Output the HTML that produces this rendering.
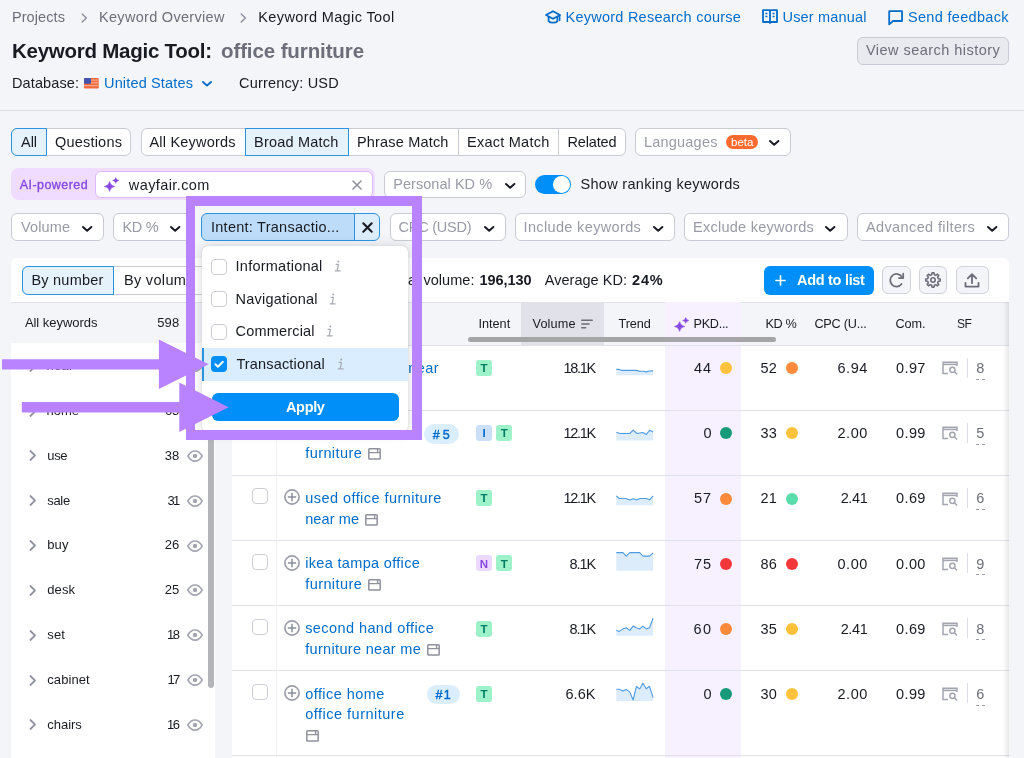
<!DOCTYPE html>
<html><head><meta charset="utf-8"><title>Keyword Magic Tool</title>
<style>
html,body{margin:0;padding:0;}
body{width:1024px;height:758px;overflow:hidden;background:#f4f5f9;position:relative;font-family:"Liberation Sans",sans-serif;}
.t{position:absolute;white-space:nowrap;font-family:"Liberation Sans",sans-serif;}
.b{position:absolute;box-sizing:border-box;overflow:visible;}
#w{position:absolute;left:0;top:0;width:1024px;height:758px;overflow:hidden;will-change:transform;background:#f4f5f9;}
</style></head><body><div id="w">
<span class="t" style="left:11.90px;top:7px;font-size:14.5px;line-height:20px;color:#6c6e79;letter-spacing:0.096px;">Projects</span>
<span class="t" style="left:99.00px;top:7px;font-size:14.5px;line-height:20px;color:#6c6e79;letter-spacing:0.299px;">Keyword Overview</span>
<span class="t" style="left:258.30px;top:7px;font-size:14.5px;line-height:20px;color:#191b23;letter-spacing:0.372px;">Keyword Magic Tool</span>
<svg class="b" style="left:80.50px;top:13.00px;" width="7" height="10" viewBox="0 0 7 10"><path d="M1.2 1 L5.4 5 L1.2 9" fill="none" stroke="#8a8e9b" stroke-width="1.4" stroke-linecap="round" stroke-linejoin="round"/></svg>
<svg class="b" style="left:239.50px;top:13.00px;" width="7" height="10" viewBox="0 0 7 10"><path d="M1.2 1 L5.4 5 L1.2 9" fill="none" stroke="#8a8e9b" stroke-width="1.4" stroke-linecap="round" stroke-linejoin="round"/></svg>
<span class="t" style="left:12.00px;top:37px;font-size:20.5px;line-height:27px;color:#191b23;font-weight:700;letter-spacing:-0.250px;">Keyword Magic Tool:</span>
<span class="t" style="left:221.00px;top:37px;font-size:20.5px;line-height:27px;color:#6c6e79;font-weight:700;letter-spacing:-0.106px;">office furniture</span>
<span class="t" style="left:12.00px;top:73px;font-size:14.5px;line-height:20px;color:#191b23;letter-spacing:0.106px;">Database:</span>
<span class="t" style="left:104.00px;top:73px;font-size:14.5px;line-height:20px;color:#006dca;letter-spacing:0.156px;">United States</span>
<svg class="b" style="left:201.60px;top:80.90px;" width="10" height="6.0" viewBox="-1 -1 10 6.0"><path d="M0 0 L4.0 3.6 L8 0" fill="none" stroke="#006dca" stroke-width="1.9" stroke-linecap="round" stroke-linejoin="round"/></svg>
<span class="t" style="left:239.00px;top:73px;font-size:14.5px;line-height:20px;color:#191b23;letter-spacing:0.177px;">Currency: USD</span>
<svg class="b" style="left:84.00px;top:78.00px;" width="15" height="11" viewBox="0 0 15 11"><rect width="14.8" height="10.4" rx="1" fill="#f4693c"/><rect x="7" y="1.5" width="7.8" height="1.2" fill="#f9a88d"/><rect x="7" y="4.2" width="7.8" height="1.2" fill="#f9a88d"/><rect y="7.0" width="14.8" height="1.2" fill="#f9a88d"/><rect width="7" height="5.8" rx="1" fill="#4453ad"/></svg>
<span class="t" style="left:565.50px;top:7px;font-size:14.5px;line-height:20px;color:#006dca;letter-spacing:0.242px;">Keyword Research course</span>
<span class="t" style="left:782.50px;top:7px;font-size:14.5px;line-height:20px;color:#006dca;letter-spacing:0.172px;">User manual</span>
<span class="t" style="left:908.00px;top:7px;font-size:14.5px;line-height:20px;color:#006dca;letter-spacing:0.309px;">Send feedback</span>
<svg class="b" style="left:545.00px;top:9.50px;" width="16" height="15" viewBox="0 0 16 15"><path d="M8 1.2 L15 5 L8 8.8 L1 5 Z" fill="none" stroke="#006dca" stroke-width="1.8" stroke-linejoin="round"/><path d="M3.6 7 V11.2 C5 13.2 11 13.2 12.4 11.2 V7" fill="none" stroke="#006dca" stroke-width="1.8" stroke-linejoin="round"/><path d="M14.6 5.4 V10.5" stroke="#006dca" stroke-width="1.6" stroke-linecap="round"/></svg>
<svg class="b" style="left:762.00px;top:9.00px;" width="16" height="16" viewBox="0 0 16 16"><path d="M1 1.2 H7 Q8 1.2 8 2.2 V14 Q8 13 7 13 H1 Z M15 1.2 H9 Q8 1.2 8 2.2 V14 Q8 13 9 13 H15 Z" fill="none" stroke="#006dca" stroke-width="1.8" stroke-linejoin="round"/><path d="M3.4 4.6 H5.4 M3.4 7.4 H5.4 M10.6 4.6 H12.6 M10.6 7.4 H12.6" stroke="#006dca" stroke-width="1.5"/></svg>
<svg class="b" style="left:888.00px;top:9.50px;" width="16" height="16" viewBox="0 0 16 16"><path d="M1.2 1.2 H14 V11 H5 L1.2 14.4 Z" fill="none" stroke="#006dca" stroke-width="1.8" stroke-linejoin="round"/></svg>
<div class="b" style="left:856.50px;top:37.00px;width:152.70px;height:28.00px;background:#e9eaef;border:1px solid #c8cbd3;border-radius:6px;"></div>
<span class="t" style="left:866.00px;top:40px;font-size:14.5px;line-height:20px;color:#6c6e79;letter-spacing:0.462px;">View search history</span>
<div class="b" style="left:0.00px;top:109.50px;width:1024.00px;height:1.00px;background:#dcdee4;"></div>
<div class="b" style="left:11.20px;top:127.50px;width:120.00px;height:28.00px;background:#fff;border:1px solid #c8cbd3;border-radius:6px;"></div>
<div class="b" style="left:11.20px;top:127.50px;width:35.40px;height:28.00px;background:#e5f1fb;border:1px solid #2b94e1;border-radius:6px 0px 0px 6px;"></div>
<span class="t" style="left:21.00px;top:132px;font-size:14.5px;line-height:20px;color:#191b23;letter-spacing:-0.046px;">All</span>
<span class="t" style="left:55.00px;top:132px;font-size:14.5px;line-height:20px;color:#191b23;letter-spacing:0.202px;">Questions</span>
<div class="b" style="left:140.50px;top:127.50px;width:485.50px;height:28.00px;background:#fff;border:1px solid #c8cbd3;border-radius:6px;"></div>
<div class="b" style="left:457.50px;top:128.50px;width:1.00px;height:26.00px;background:#c8cbd3;"></div>
<div class="b" style="left:557.90px;top:128.50px;width:1.00px;height:26.00px;background:#c8cbd3;"></div>
<div class="b" style="left:244.50px;top:127.50px;width:104.00px;height:28.00px;background:#e5f1fb;border:1px solid #2b94e1;border-radius:0px 0px 0px 0px;"></div>
<span class="t" style="left:149.50px;top:132px;font-size:14.5px;line-height:20px;color:#191b23;letter-spacing:0.191px;">All Keywords</span>
<span class="t" style="left:254.00px;top:132px;font-size:14.5px;line-height:20px;color:#191b23;letter-spacing:0.219px;">Broad Match</span>
<span class="t" style="left:357.00px;top:132px;font-size:14.5px;line-height:20px;color:#191b23;letter-spacing:0.178px;">Phrase Match</span>
<span class="t" style="left:467.00px;top:132px;font-size:14.5px;line-height:20px;color:#191b23;letter-spacing:0.250px;">Exact Match</span>
<span class="t" style="left:567.50px;top:132px;font-size:14.5px;line-height:20px;color:#191b23;letter-spacing:-0.150px;">Related</span>
<div class="b" style="left:635.00px;top:127.50px;width:155.50px;height:28.00px;background:#fff;border:1px solid #c8cbd3;border-radius:6px;"></div>
<span class="t" style="left:644.00px;top:132px;font-size:14.5px;line-height:20px;color:#989ba6;letter-spacing:0.204px;">Languages</span>
<div class="b" style="left:726.00px;top:134.60px;width:31.60px;height:14.10px;background:#ff6b2e;border-radius:7px;"></div>
<span class="t" style="left:731.00px;top:134px;font-size:11.5px;line-height:16px;color:#fff;letter-spacing:0.034px;">beta</span>
<svg class="b" style="left:768.80px;top:139.70px;" width="10.4" height="6.2" viewBox="-1 -1 10.4 6.2"><path d="M0 0 L4.2 3.8000000000000003 L8.4 0" fill="none" stroke="#191b23" stroke-width="2" stroke-linecap="round" stroke-linejoin="round"/></svg>
<div class="b" style="left:11.20px;top:168.30px;width:363.80px;height:32.20px;background:#efdcff;border-radius:8px;"></div>
<span class="t" style="left:19.80px;top:176px;font-size:12.5px;line-height:18px;color:#8649e1;letter-spacing:0.429px;-webkit-text-stroke:0.35px #8649e1;">AI-powered</span>
<div class="b" style="left:94.70px;top:170.80px;width:278.30px;height:27.40px;background:#fff;border:1px solid #dcb8ff;border-radius:6px;"></div>
<span class="t" style="left:128.80px;top:175px;font-size:14.5px;line-height:20px;color:#191b23;letter-spacing:0.405px;">wayfair.com</span>
<svg class="b" style="left:104.00px;top:176.00px;" width="16.0" height="16.0" viewBox="0 0 16 16"><path d="M5.6 5.6 Q6.4319999999999995 9.716 10.8 10.5 Q6.4319999999999995 11.284 5.6 15.4 Q4.768 11.284 0.39999999999999947 10.5 Q4.768 9.716 5.6 5.6 Z" fill="#8649e1" stroke="#8649e1" stroke-width="0.5" stroke-linejoin="round"/><path d="M11.75 1.5500000000000003 Q12.262 3.986 14.95 4.45 Q12.262 4.914 11.75 7.35 Q11.238 4.914 8.55 4.45 Q11.238 3.986 11.75 1.5500000000000003 Z" fill="#8649e1" stroke="#8649e1" stroke-width="0.4" stroke-linejoin="round"/></svg>
<svg class="b" style="left:352.00px;top:179.50px;" width="10" height="10" viewBox="0 0 10 10"><path d="M1 1 L9 9 M9 1 L1 9" stroke="#8a8e9b" stroke-width="1.5" stroke-linecap="round"/></svg>
<div class="b" style="left:384.00px;top:170.50px;width:142.20px;height:27.90px;background:#fff;border:1px solid #c8cbd3;border-radius:6px;"></div>
<span class="t" style="left:393.30px;top:174px;font-size:14.5px;line-height:20px;color:#989ba6;letter-spacing:0.038px;">Personal KD %</span>
<svg class="b" style="left:504.50px;top:182.50px;" width="10.4" height="6.2" viewBox="-1 -1 10.4 6.2"><path d="M0 0 L4.2 3.8000000000000003 L8.4 0" fill="none" stroke="#191b23" stroke-width="2" stroke-linecap="round" stroke-linejoin="round"/></svg>
<div class="b" style="left:535.10px;top:174.80px;width:36.10px;height:19.70px;background:#008ff8;border-radius:10px;"></div>
<div class="b" style="left:553.20px;top:176.40px;width:16.70px;height:16.60px;background:#fff;border-radius:50%;"></div>
<span class="t" style="left:580.50px;top:174px;font-size:14.5px;line-height:20px;color:#191b23;letter-spacing:0.311px;">Show ranking keywords</span>
<div class="b" style="left:11.40px;top:213.20px;width:92.70px;height:28.30px;background:#fff;border:1px solid #c8cbd3;border-radius:6px;"></div>
<span class="t" style="left:21.00px;top:217px;font-size:14.5px;line-height:20px;color:#989ba6;letter-spacing:0.116px;">Volume</span>
<svg class="b" style="left:82.20px;top:225.60px;" width="10.4" height="6.2" viewBox="-1 -1 10.4 6.2"><path d="M0 0 L4.2 3.8000000000000003 L8.4 0" fill="none" stroke="#191b23" stroke-width="2" stroke-linecap="round" stroke-linejoin="round"/></svg>
<div class="b" style="left:113.00px;top:213.20px;width:79.00px;height:28.30px;background:#fff;border:1px solid #c8cbd3;border-radius:6px;"></div>
<span class="t" style="left:122.50px;top:217px;font-size:14.5px;line-height:20px;color:#989ba6;letter-spacing:-0.304px;">KD %</span>
<svg class="b" style="left:170.30px;top:225.60px;" width="10.4" height="6.2" viewBox="-1 -1 10.4 6.2"><path d="M0 0 L4.2 3.8000000000000003 L8.4 0" fill="none" stroke="#191b23" stroke-width="2" stroke-linecap="round" stroke-linejoin="round"/></svg>
<div class="b" style="left:389.50px;top:213.20px;width:116.50px;height:28.30px;background:#fff;border:1px solid #c8cbd3;border-radius:6px;"></div>
<span class="t" style="left:398.50px;top:217px;font-size:14.5px;line-height:20px;color:#989ba6;letter-spacing:-0.225px;">CPC (USD)</span>
<svg class="b" style="left:483.80px;top:225.60px;" width="10.4" height="6.2" viewBox="-1 -1 10.4 6.2"><path d="M0 0 L4.2 3.8000000000000003 L8.4 0" fill="none" stroke="#191b23" stroke-width="2" stroke-linecap="round" stroke-linejoin="round"/></svg>
<div class="b" style="left:514.50px;top:213.20px;width:160.50px;height:28.30px;background:#fff;border:1px solid #c8cbd3;border-radius:6px;"></div>
<span class="t" style="left:523.50px;top:217px;font-size:14.5px;line-height:20px;color:#989ba6;letter-spacing:0.353px;">Include keywords</span>
<svg class="b" style="left:652.80px;top:225.60px;" width="10.4" height="6.2" viewBox="-1 -1 10.4 6.2"><path d="M0 0 L4.2 3.8000000000000003 L8.4 0" fill="none" stroke="#191b23" stroke-width="2" stroke-linecap="round" stroke-linejoin="round"/></svg>
<div class="b" style="left:683.50px;top:213.20px;width:164.00px;height:28.30px;background:#fff;border:1px solid #c8cbd3;border-radius:6px;"></div>
<span class="t" style="left:693.00px;top:217px;font-size:14.5px;line-height:20px;color:#989ba6;letter-spacing:0.267px;">Exclude keywords</span>
<svg class="b" style="left:825.30px;top:225.60px;" width="10.4" height="6.2" viewBox="-1 -1 10.4 6.2"><path d="M0 0 L4.2 3.8000000000000003 L8.4 0" fill="none" stroke="#191b23" stroke-width="2" stroke-linecap="round" stroke-linejoin="round"/></svg>
<div class="b" style="left:856.50px;top:213.20px;width:152.80px;height:28.30px;background:#fff;border:1px solid #c8cbd3;border-radius:6px;"></div>
<span class="t" style="left:866.00px;top:217px;font-size:14.5px;line-height:20px;color:#989ba6;letter-spacing:0.377px;">Advanced filters</span>
<svg class="b" style="left:986.80px;top:225.60px;" width="10.4" height="6.2" viewBox="-1 -1 10.4 6.2"><path d="M0 0 L4.2 3.8000000000000003 L8.4 0" fill="none" stroke="#191b23" stroke-width="2" stroke-linecap="round" stroke-linejoin="round"/></svg>
<div class="b" style="left:201.20px;top:213.20px;width:153.80px;height:28.30px;background:#bcdcf9;border:1px solid #2b94e1;border-radius:6px 0 0 6px;"></div>
<div class="b" style="left:354.00px;top:213.20px;width:26.30px;height:28.30px;background:#deedfb;border:1px solid #2b94e1;border-radius:0 6px 6px 0;"></div>
<span class="t" style="left:211.00px;top:217px;font-size:14.5px;line-height:20px;color:#191b23;letter-spacing:0.253px;">Intent: Transactio...</span>
<svg class="b" style="left:362.00px;top:222.00px;" width="11" height="11" viewBox="0 0 11 11"><path d="M1.3 1.3 L9.7 9.7 M9.7 1.3 L1.3 9.7" stroke="#191b23" stroke-width="2.1" stroke-linecap="round"/></svg>
<div class="b" style="left:11.30px;top:257.70px;width:203.90px;height:512.30px;background:#fff;border-radius:6px;"></div>
<div class="b" style="left:22.00px;top:266.00px;width:228.00px;height:28.50px;background:#fff;border:1px solid #c8cbd3;border-radius:6px;"></div>
<div class="b" style="left:22.00px;top:266.00px;width:91.70px;height:28.50px;background:#e5f1fb;border:1px solid #2b94e1;border-radius:6px 0 0 6px;"></div>
<span class="t" style="left:31.40px;top:270px;font-size:14.5px;line-height:20px;color:#191b23;letter-spacing:0.234px;">By number</span>
<span class="t" style="left:123.90px;top:270px;font-size:14.5px;line-height:20px;color:#191b23;letter-spacing:0.342px;">By volume</span>
<div class="b" style="left:11.30px;top:302.00px;width:203.90px;height:41.00px;background:#f4f5f9;"></div>
<div class="b" style="left:11.30px;top:301.60px;width:203.90px;height:1.00px;background:#e0e1e9;"></div>
<span class="t" style="left:24.90px;top:313px;font-size:13px;line-height:19px;color:#191b23;letter-spacing:-0.040px;">All keywords</span>
<span class="t" style="left:157.30px;top:313px;font-size:13px;line-height:19px;color:#191b23;letter-spacing:0.084px;">598</span>
<svg class="b" style="left:29.40px;top:360.70px;" width="8" height="11" viewBox="0 0 8 11"><path d="M1.4 1 L6 5.5 L1.4 10" fill="none" stroke="#9194a0" stroke-width="1.75" stroke-linecap="round" stroke-linejoin="round"/></svg>
<span class="t" style="left:46.50px;top:356px;font-size:13px;line-height:19px;color:#191b23;letter-spacing:0.280px;">near</span>
<span class="t" style="left:165.00px;top:356px;font-size:13px;line-height:19px;color:#191b23;letter-spacing:-0.173px;">84</span>
<svg class="b" style="left:186.80px;top:360.20px;" width="16" height="12" viewBox="0 0 16 12"><path d="M0.8 6 C3 2.2 5.4 0.9 8 0.9 C10.6 0.9 13 2.2 15.2 6 C13 9.8 10.6 11.1 8 11.1 C5.4 11.1 3 9.8 0.8 6 Z" fill="none" stroke="#a3a6b1" stroke-width="1.55"/><circle cx="8" cy="6" r="2.2" fill="#a3a6b1"/></svg>
<svg class="b" style="left:29.40px;top:405.54px;" width="8" height="11" viewBox="0 0 8 11"><path d="M1.4 1 L6 5.5 L1.4 10" fill="none" stroke="#9194a0" stroke-width="1.75" stroke-linecap="round" stroke-linejoin="round"/></svg>
<span class="t" style="left:46.50px;top:401px;font-size:13px;line-height:19px;color:#191b23;letter-spacing:-0.005px;">home</span>
<span class="t" style="left:165.00px;top:401px;font-size:13px;line-height:19px;color:#191b23;letter-spacing:-0.173px;">65</span>
<svg class="b" style="left:186.80px;top:405.04px;" width="16" height="12" viewBox="0 0 16 12"><path d="M0.8 6 C3 2.2 5.4 0.9 8 0.9 C10.6 0.9 13 2.2 15.2 6 C13 9.8 10.6 11.1 8 11.1 C5.4 11.1 3 9.8 0.8 6 Z" fill="none" stroke="#a3a6b1" stroke-width="1.55"/><circle cx="8" cy="6" r="2.2" fill="#a3a6b1"/></svg>
<svg class="b" style="left:29.40px;top:450.38px;" width="8" height="11" viewBox="0 0 8 11"><path d="M1.4 1 L6 5.5 L1.4 10" fill="none" stroke="#9194a0" stroke-width="1.75" stroke-linecap="round" stroke-linejoin="round"/></svg>
<span class="t" style="left:47.30px;top:446px;font-size:13px;line-height:19px;color:#191b23;letter-spacing:-0.344px;">use</span>
<span class="t" style="left:164.80px;top:446px;font-size:13px;line-height:19px;color:#191b23;letter-spacing:-0.040px;">38</span>
<svg class="b" style="left:186.80px;top:449.88px;" width="16" height="12" viewBox="0 0 16 12"><path d="M0.8 6 C3 2.2 5.4 0.9 8 0.9 C10.6 0.9 13 2.2 15.2 6 C13 9.8 10.6 11.1 8 11.1 C5.4 11.1 3 9.8 0.8 6 Z" fill="none" stroke="#a3a6b1" stroke-width="1.55"/><circle cx="8" cy="6" r="2.2" fill="#a3a6b1"/></svg>
<svg class="b" style="left:29.40px;top:495.22px;" width="8" height="11" viewBox="0 0 8 11"><path d="M1.4 1 L6 5.5 L1.4 10" fill="none" stroke="#9194a0" stroke-width="1.75" stroke-linecap="round" stroke-linejoin="round"/></svg>
<span class="t" style="left:47.30px;top:491px;font-size:13px;line-height:19px;color:#191b23;letter-spacing:-0.328px;">sale</span>
<span class="t" style="left:167.50px;top:491px;font-size:13px;line-height:19px;color:#191b23;letter-spacing:-1.840px;">31</span>
<svg class="b" style="left:186.80px;top:494.72px;" width="16" height="12" viewBox="0 0 16 12"><path d="M0.8 6 C3 2.2 5.4 0.9 8 0.9 C10.6 0.9 13 2.2 15.2 6 C13 9.8 10.6 11.1 8 11.1 C5.4 11.1 3 9.8 0.8 6 Z" fill="none" stroke="#a3a6b1" stroke-width="1.55"/><circle cx="8" cy="6" r="2.2" fill="#a3a6b1"/></svg>
<svg class="b" style="left:29.40px;top:540.06px;" width="8" height="11" viewBox="0 0 8 11"><path d="M1.4 1 L6 5.5 L1.4 10" fill="none" stroke="#9194a0" stroke-width="1.75" stroke-linecap="round" stroke-linejoin="round"/></svg>
<span class="t" style="left:47.30px;top:535px;font-size:13px;line-height:19px;color:#191b23;letter-spacing:0.096px;">buy</span>
<span class="t" style="left:164.80px;top:535px;font-size:13px;line-height:19px;color:#191b23;letter-spacing:-0.040px;">26</span>
<svg class="b" style="left:186.80px;top:539.56px;" width="16" height="12" viewBox="0 0 16 12"><path d="M0.8 6 C3 2.2 5.4 0.9 8 0.9 C10.6 0.9 13 2.2 15.2 6 C13 9.8 10.6 11.1 8 11.1 C5.4 11.1 3 9.8 0.8 6 Z" fill="none" stroke="#a3a6b1" stroke-width="1.55"/><circle cx="8" cy="6" r="2.2" fill="#a3a6b1"/></svg>
<svg class="b" style="left:29.40px;top:584.90px;" width="8" height="11" viewBox="0 0 8 11"><path d="M1.4 1 L6 5.5 L1.4 10" fill="none" stroke="#9194a0" stroke-width="1.75" stroke-linecap="round" stroke-linejoin="round"/></svg>
<span class="t" style="left:47.30px;top:580px;font-size:13px;line-height:19px;color:#191b23;letter-spacing:0.069px;">desk</span>
<span class="t" style="left:164.80px;top:580px;font-size:13px;line-height:19px;color:#191b23;letter-spacing:-0.040px;">25</span>
<svg class="b" style="left:186.80px;top:584.40px;" width="16" height="12" viewBox="0 0 16 12"><path d="M0.8 6 C3 2.2 5.4 0.9 8 0.9 C10.6 0.9 13 2.2 15.2 6 C13 9.8 10.6 11.1 8 11.1 C5.4 11.1 3 9.8 0.8 6 Z" fill="none" stroke="#a3a6b1" stroke-width="1.55"/><circle cx="8" cy="6" r="2.2" fill="#a3a6b1"/></svg>
<svg class="b" style="left:29.40px;top:629.74px;" width="8" height="11" viewBox="0 0 8 11"><path d="M1.4 1 L6 5.5 L1.4 10" fill="none" stroke="#9194a0" stroke-width="1.75" stroke-linecap="round" stroke-linejoin="round"/></svg>
<span class="t" style="left:47.30px;top:625px;font-size:13px;line-height:19px;color:#191b23;letter-spacing:0.143px;">set</span>
<span class="t" style="left:167.00px;top:625px;font-size:13px;line-height:19px;color:#191b23;letter-spacing:-1.506px;">18</span>
<svg class="b" style="left:186.80px;top:629.24px;" width="16" height="12" viewBox="0 0 16 12"><path d="M0.8 6 C3 2.2 5.4 0.9 8 0.9 C10.6 0.9 13 2.2 15.2 6 C13 9.8 10.6 11.1 8 11.1 C5.4 11.1 3 9.8 0.8 6 Z" fill="none" stroke="#a3a6b1" stroke-width="1.55"/><circle cx="8" cy="6" r="2.2" fill="#a3a6b1"/></svg>
<svg class="b" style="left:29.40px;top:674.58px;" width="8" height="11" viewBox="0 0 8 11"><path d="M1.4 1 L6 5.5 L1.4 10" fill="none" stroke="#9194a0" stroke-width="1.75" stroke-linecap="round" stroke-linejoin="round"/></svg>
<span class="t" style="left:47.30px;top:670px;font-size:13px;line-height:19px;color:#191b23;letter-spacing:0.059px;">cabinet</span>
<span class="t" style="left:167.50px;top:670px;font-size:13px;line-height:19px;color:#191b23;letter-spacing:-1.840px;">17</span>
<svg class="b" style="left:186.80px;top:674.08px;" width="16" height="12" viewBox="0 0 16 12"><path d="M0.8 6 C3 2.2 5.4 0.9 8 0.9 C10.6 0.9 13 2.2 15.2 6 C13 9.8 10.6 11.1 8 11.1 C5.4 11.1 3 9.8 0.8 6 Z" fill="none" stroke="#a3a6b1" stroke-width="1.55"/><circle cx="8" cy="6" r="2.2" fill="#a3a6b1"/></svg>
<svg class="b" style="left:29.40px;top:719.42px;" width="8" height="11" viewBox="0 0 8 11"><path d="M1.4 1 L6 5.5 L1.4 10" fill="none" stroke="#9194a0" stroke-width="1.75" stroke-linecap="round" stroke-linejoin="round"/></svg>
<span class="t" style="left:47.30px;top:715px;font-size:13px;line-height:19px;color:#191b23;letter-spacing:-0.032px;">chairs</span>
<span class="t" style="left:166.90px;top:715px;font-size:13px;line-height:19px;color:#191b23;letter-spacing:-1.440px;">16</span>
<svg class="b" style="left:186.80px;top:718.92px;" width="16" height="12" viewBox="0 0 16 12"><path d="M0.8 6 C3 2.2 5.4 0.9 8 0.9 C10.6 0.9 13 2.2 15.2 6 C13 9.8 10.6 11.1 8 11.1 C5.4 11.1 3 9.8 0.8 6 Z" fill="none" stroke="#a3a6b1" stroke-width="1.55"/><circle cx="8" cy="6" r="2.2" fill="#a3a6b1"/></svg>
<div class="b" style="left:208.00px;top:346.00px;width:5.70px;height:342.40px;background:#b4b5bb;border-radius:3px;"></div>
<div class="b" style="left:231.80px;top:257.70px;width:777.50px;height:512.30px;background:#fff;border-radius:6px;"></div>
<div class="b" style="left:231.80px;top:302.20px;width:777.50px;height:43.00px;background:#f4f5f9;"></div>
<div class="b" style="left:231.80px;top:301.70px;width:777.50px;height:1.00px;background:#e0e1e9;"></div>
<div class="b" style="left:520.60px;top:302.20px;width:83.60px;height:43.00px;background:#e0e1e9;"></div>
<div class="b" style="left:665.20px;top:302.20px;width:75.40px;height:467.80px;background:#f7f0ff;"></div>
<div class="b" style="left:231.80px;top:344.60px;width:777.50px;height:1.00px;background:#e0e1e9;"></div>
<div class="b" style="left:231.80px;top:409.77px;width:777.50px;height:1.00px;background:#e0e1e9;"></div>
<div class="b" style="left:231.80px;top:474.94px;width:777.50px;height:1.00px;background:#e0e1e9;"></div>
<div class="b" style="left:231.80px;top:540.11px;width:777.50px;height:1.00px;background:#e0e1e9;"></div>
<div class="b" style="left:231.80px;top:605.28px;width:777.50px;height:1.00px;background:#e0e1e9;"></div>
<div class="b" style="left:231.80px;top:670.45px;width:777.50px;height:1.00px;background:#e0e1e9;"></div>
<div class="b" style="left:231.80px;top:755.30px;width:777.50px;height:1.00px;background:#e0e1e9;"></div>
<div class="b" style="left:275.60px;top:345.20px;width:0.80px;height:424.80px;background:#f1f2f5;"></div>
<span class="t" style="left:244.00px;top:270px;font-size:14.5px;line-height:20px;color:#191b23;letter-spacing:0.000px;">All keywords: 598</span>
<span class="t" style="left:388.50px;top:270px;font-size:14.5px;line-height:20px;color:#191b23;letter-spacing:0.046px;">Total volume:</span>
<span class="t" style="left:479.60px;top:270px;font-size:14.5px;line-height:20px;color:#191b23;font-weight:700;letter-spacing:-0.094px;">196,130</span>
<span class="t" style="left:544.70px;top:270px;font-size:14.5px;line-height:20px;color:#191b23;letter-spacing:0.034px;">Average KD:</span>
<span class="t" style="left:632.00px;top:270px;font-size:14.5px;line-height:20px;color:#191b23;font-weight:700;letter-spacing:0.872px;">24%</span>
<div class="b" style="left:764.10px;top:266.00px;width:110.00px;height:28.70px;background:#008ff8;border-radius:6px;"></div>
<span class="t" style="left:797.10px;top:270px;font-size:14.5px;line-height:20px;color:#fff;font-weight:700;letter-spacing:-0.303px;">Add to list</span>
<svg class="b" style="left:774.90px;top:274.70px;" width="11" height="11" viewBox="0 0 11 11"><path d="M5.5 0.9 V10.1 M0.9 5.5 H10.1" stroke="#fff" stroke-width="1.6" stroke-linecap="round"/></svg>
<div class="b" style="left:882.10px;top:266.10px;width:28.50px;height:28.30px;background:#f4f5f9;border:1px solid #cfd2d9;border-radius:6px;"></div>
<div class="b" style="left:919.00px;top:266.10px;width:28.00px;height:28.30px;background:#f4f5f9;border:1px solid #cfd2d9;border-radius:6px;"></div>
<div class="b" style="left:955.70px;top:266.10px;width:33.10px;height:28.30px;background:#f4f5f9;border:1px solid #cfd2d9;border-radius:6px;"></div>
<svg class="b" style="left:888.00px;top:272.00px;" width="18" height="17" viewBox="0 0 18 17"><path d="M13.6 12.0 A6.3 6.3 0 1 1 13.9 5.0" fill="none" stroke="#6c6e79" stroke-width="1.75" stroke-linecap="round"/><path d="M15.2 1.7 V6.0 H10.9" fill="none" stroke="#6c6e79" stroke-width="1.75" stroke-linecap="round" stroke-linejoin="round"/></svg>
<svg class="b" style="left:924.90px;top:272.00px;" width="16" height="16" viewBox="0 0 16 16"><path d="M13.35 6.72 L15.24 7.03 L15.24 8.97 L13.35 9.28 L12.69 10.87 L13.80 12.43 L12.43 13.80 L10.87 12.69 L9.28 13.35 L8.97 15.24 L7.03 15.24 L6.72 13.35 L5.13 12.69 L3.57 13.80 L2.20 12.43 L3.31 10.87 L2.65 9.28 L0.76 8.97 L0.76 7.03 L2.65 6.72 L3.31 5.13 L2.20 3.57 L3.57 2.20 L5.13 3.31 L6.72 2.65 L7.03 0.76 L8.97 0.76 L9.28 2.65 L10.87 3.31 L12.43 2.20 L13.80 3.57 L12.69 5.13 Z" fill="none" stroke="#6c6e79" stroke-width="1.6" stroke-linejoin="round"/><circle cx="8" cy="8" r="2.2" fill="none" stroke="#6c6e79" stroke-width="1.6"/></svg>
<svg class="b" style="left:963.90px;top:272.00px;" width="16" height="16" viewBox="0 0 16 16"><path d="M8 11.2 V2.4 M3.8 6.4 L8 2.2 L12.2 6.4" fill="none" stroke="#6c6e79" stroke-width="1.8" stroke-linecap="round" stroke-linejoin="round"/><path d="M1.5 11 V14.6 H14.5 V11" fill="none" stroke="#6c6e79" stroke-width="1.8" stroke-linecap="round" stroke-linejoin="round"/></svg>
<span class="t" style="left:305.00px;top:315px;font-size:12.7px;line-height:18px;color:#191b23;letter-spacing:0.000px;">Keyword</span>
<span class="t" style="left:478.40px;top:315px;font-size:12.7px;line-height:18px;color:#191b23;letter-spacing:0.005px;">Intent</span>
<span class="t" style="left:532.50px;top:315px;font-size:12.7px;line-height:18px;color:#191b23;letter-spacing:0.153px;">Volume</span>
<svg class="b" style="left:581.30px;top:319.00px;" width="12" height="10" viewBox="0 0 12 10"><path d="M0.8 1.2 H11.2 M0.8 5 H8 M0.8 8.8 H4.6" stroke="#6c6e79" stroke-width="1.6" stroke-linecap="round"/></svg>
<span class="t" style="left:618.50px;top:315px;font-size:12.7px;line-height:18px;color:#191b23;letter-spacing:-0.112px;">Trend</span>
<svg class="b" style="left:674.20px;top:316.20px;" width="16.0" height="16.0" viewBox="0 0 16 16"><path d="M5.6 5.6 Q6.4319999999999995 9.716 10.8 10.5 Q6.4319999999999995 11.284 5.6 15.4 Q4.768 11.284 0.39999999999999947 10.5 Q4.768 9.716 5.6 5.6 Z" fill="#8649e1" stroke="#8649e1" stroke-width="0.5" stroke-linejoin="round"/><path d="M11.75 1.5500000000000003 Q12.262 3.986 14.95 4.45 Q12.262 4.914 11.75 7.35 Q11.238 4.914 8.55 4.45 Q11.238 3.986 11.75 1.5500000000000003 Z" fill="#8649e1" stroke="#8649e1" stroke-width="0.4" stroke-linejoin="round"/></svg>
<span class="t" style="left:693.50px;top:315px;font-size:12.7px;line-height:18px;color:#191b23;letter-spacing:-0.309px;">PKD...</span>
<span class="t" style="left:765.50px;top:315px;font-size:12.7px;line-height:18px;color:#191b23;letter-spacing:-0.361px;">KD %</span>
<span class="t" style="left:814.40px;top:315px;font-size:12.7px;line-height:18px;color:#191b23;letter-spacing:-0.239px;">CPC (U...</span>
<span class="t" style="left:895.50px;top:315px;font-size:12.7px;line-height:18px;color:#191b23;letter-spacing:-0.098px;">Com.</span>
<span class="t" style="left:956.90px;top:315px;font-size:12px;line-height:18px;color:#191b23;letter-spacing:-0.423px;">SF</span>
<div class="b" style="left:468.00px;top:336.60px;width:308.00px;height:5.80px;background:#a5a5a8;border-radius:3px;"></div>
<svg class="b" style="left:0;top:0" width="1024" height="758" viewBox="0 0 1024 758">
<path d="M616.3 369.4 L619.3 369.4 L621.8 370.4 L636.3 370.4 L639.3 371.1 L643.3 371.3 L646.3 371.9 L649.3 371.0 L653.1 370.9 L653.1 375.3 L616.3 375.3 Z" fill="#dcecfb"/><path d="M616.3 369.4 L619.3 369.4 L621.8 370.4 L636.3 370.4 L639.3 371.1 L643.3 371.3 L646.3 371.9 L649.3 371.0 L653.1 370.9" fill="none" stroke="#4f9be3" stroke-width="1.1" stroke-linejoin="round"/>
<path d="M616.3 432.2 L619.8 433.5 L629.8 433.5 L633.1 430.1 L637.0 433.5 L642.9 432.5 L646.3 434.4 L649.8 430.2 L653.1 432.1 L653.1 440.4 L616.3 440.4 Z" fill="#dcecfb"/><path d="M616.3 432.2 L619.8 433.5 L629.8 433.5 L633.1 430.1 L637.0 433.5 L642.9 432.5 L646.3 434.4 L649.8 430.2 L653.1 432.1" fill="none" stroke="#4f9be3" stroke-width="1.1" stroke-linejoin="round"/>
<path d="M616.3 495.8 L619.3 498.5 L625.8 498.5 L629.8 500.0 L633.1 498.7 L636.6 500.0 L639.9 498.5 L646.3 498.5 L649.5 499.8 L653.1 495.8 L653.1 505.3 L616.3 505.3 Z" fill="#dcecfb"/><path d="M616.3 495.8 L619.3 498.5 L625.8 498.5 L629.8 500.0 L633.1 498.7 L636.6 500.0 L639.9 498.5 L646.3 498.5 L649.5 499.8 L653.1 495.8" fill="none" stroke="#4f9be3" stroke-width="1.1" stroke-linejoin="round"/>
<path d="M616.3 552.6 L622.9 552.6 L626.2 556.1 L629.8 552.6 L639.7 552.6 L643.0 556.1 L649.5 556.1 L653.1 552.8 L653.1 570.8 L616.3 570.8 Z" fill="#dcecfb"/><path d="M616.3 552.6 L622.9 552.6 L626.2 556.1 L629.8 552.6 L639.7 552.6 L643.0 556.1 L649.5 556.1 L653.1 552.8" fill="none" stroke="#4f9be3" stroke-width="1.1" stroke-linejoin="round"/>
<path d="M616.3 630.2 L619.2 631.4 L622.9 628.9 L626.2 627.8 L629.8 630.4 L633.1 626.1 L636.4 627.8 L639.7 628.9 L642.9 626.1 L646.2 628.9 L649.5 627.8 L653.1 618.2 L653.1 635.7 L616.3 635.7 Z" fill="#dcecfb"/><path d="M616.3 630.2 L619.2 631.4 L622.9 628.9 L626.2 627.8 L629.8 630.4 L633.1 626.1 L636.4 627.8 L639.7 628.9 L642.9 626.1 L646.2 628.9 L649.5 627.8 L653.1 618.2" fill="none" stroke="#4f9be3" stroke-width="1.1" stroke-linejoin="round"/>
<path d="M616.3 689.2 L619.2 689.2 L622.9 691.1 L626.2 689.4 L629.8 692.1 L633.1 700.0 L636.4 686.5 L639.7 688.9 L642.9 683.2 L646.2 688.8 L649.5 686.3 L653.1 697.7 L653.1 701 L616.3 701 Z" fill="#dcecfb"/><path d="M616.3 689.2 L619.2 689.2 L622.9 691.1 L626.2 689.4 L629.8 692.1 L633.1 700.0 L636.4 686.5 L639.7 688.9 L642.9 683.2 L646.2 688.8 L649.5 686.3 L653.1 697.7" fill="none" stroke="#4f9be3" stroke-width="1.1" stroke-linejoin="round"/>
</svg>
<span class="t" style="left:305.20px;top:358px;font-size:14.5px;line-height:20px;color:#006dca;letter-spacing:0.436px;">office furniture near</span>
<span class="t" style="left:305.20px;top:378px;font-size:14.5px;line-height:20px;color:#006dca;letter-spacing:-1.228px;">me</span>
<svg class="b" style="left:329.80px;top:383.00px;" width="13" height="12" viewBox="0 0 13 12"><rect x="0.8" y="0.8" width="11.4" height="10.2" rx="0.8" fill="none" stroke="#8f919d" stroke-width="1.5"/><path d="M1 4.6 H12 M9.6 1 V4.4" stroke="#8f919d" stroke-width="1.4"/></svg>
<div class="b" style="left:476.00px;top:359.90px;width:16.00px;height:16.00px;background:#9ef2c9;border-radius:3px;"></div>
<span class="t" style="left:480.49px;top:360px;font-size:11.5px;line-height:16px;color:#007c65;font-weight:700;letter-spacing:0.000px;">T</span>
<span class="t" style="left:563.50px;top:358px;font-size:14.5px;line-height:20px;color:#191b23;letter-spacing:-1.309px;">18.1K</span>
<span class="t" style="left:694.00px;top:358px;font-size:14.5px;line-height:20px;color:#191b23;letter-spacing:1.048px;">44</span>
<div class="b" style="left:720.30px;top:362.20px;width:12.00px;height:12.00px;background:#fdc23c;border-radius:50%;"></div>
<span class="t" style="left:760.50px;top:358px;font-size:14.5px;line-height:20px;color:#191b23;letter-spacing:0.248px;">52</span>
<div class="b" style="left:785.50px;top:362.20px;width:12.00px;height:12.00px;background:#ff8a3c;border-radius:50%;"></div>
<span class="t" style="left:837.50px;top:358px;font-size:14.5px;line-height:20px;color:#191b23;letter-spacing:0.537px;">6.94</span>
<span class="t" style="left:896.00px;top:358px;font-size:14.5px;line-height:20px;color:#191b23;letter-spacing:0.394px;">0.97</span>
<svg class="b" style="left:942.00px;top:361.30px;" width="16" height="14" viewBox="0 0 16 14"><path d="M6 12.4 H1 V1.2 H15 V5" fill="none" stroke="#a3a6b1" stroke-width="1.5"/><path d="M1 3.4 H15" stroke="#a3a6b1" stroke-width="1.6"/><circle cx="10.4" cy="8.8" r="2.6" fill="none" stroke="#a3a6b1" stroke-width="1.5"/><path d="M12.4 10.8 L14.6 13" stroke="#a3a6b1" stroke-width="1.6" stroke-linecap="round"/></svg>
<div class="b" style="left:966.60px;top:357.60px;width:1.00px;height:20.00px;background:#dcdee4;"></div>
<span class="t" style="left:976.20px;top:358px;font-size:14.5px;line-height:20px;color:#6c6e79;letter-spacing:0.000px;">8</span>
<div class="b" style="left:976.00px;top:378.80px;width:9.00px;height:1.00px;background:linear-gradient(90deg,#9a9ca8 0 3.2px,transparent 3.2px 5.8px,#9a9ca8 5.8px 9px);"></div>
<span class="t" style="left:305.20px;top:423px;font-size:14.5px;line-height:20px;color:#006dca;letter-spacing:0.496px;">office furniture</span>
<span class="t" style="left:305.20px;top:443px;font-size:14.5px;line-height:20px;color:#006dca;letter-spacing:0.425px;">furniture</span>
<svg class="b" style="left:368.30px;top:448.00px;" width="13" height="12" viewBox="0 0 13 12"><rect x="0.8" y="0.8" width="11.4" height="10.2" rx="0.8" fill="none" stroke="#8f919d" stroke-width="1.5"/><path d="M1 4.6 H12 M9.6 1 V4.4" stroke="#8f919d" stroke-width="1.4"/></svg>
<div class="b" style="left:476.00px;top:425.07px;width:16.00px;height:16.00px;background:#cbe0f8;border-radius:3px;"></div>
<span class="t" style="left:482.40px;top:425px;font-size:11.5px;line-height:16px;color:#006dca;font-weight:700;letter-spacing:0.000px;">I</span>
<div class="b" style="left:496.30px;top:425.07px;width:16.00px;height:16.00px;background:#9ef2c9;border-radius:3px;"></div>
<span class="t" style="left:500.79px;top:425px;font-size:11.5px;line-height:16px;color:#007c65;font-weight:700;letter-spacing:0.000px;">T</span>
<span class="t" style="left:563.50px;top:423px;font-size:14.5px;line-height:20px;color:#191b23;letter-spacing:-1.309px;">12.1K</span>
<span class="t" style="left:703.50px;top:423px;font-size:14.5px;line-height:20px;color:#191b23;letter-spacing:0.000px;">0</span>
<div class="b" style="left:720.30px;top:427.37px;width:12.00px;height:12.00px;background:#179a7a;border-radius:50%;"></div>
<span class="t" style="left:760.50px;top:423px;font-size:14.5px;line-height:20px;color:#191b23;letter-spacing:0.248px;">33</span>
<div class="b" style="left:785.50px;top:427.37px;width:12.00px;height:12.00px;background:#fdc23c;border-radius:50%;"></div>
<span class="t" style="left:837.50px;top:423px;font-size:14.5px;line-height:20px;color:#191b23;letter-spacing:0.537px;">2.00</span>
<span class="t" style="left:896.00px;top:423px;font-size:14.5px;line-height:20px;color:#191b23;letter-spacing:0.394px;">0.99</span>
<svg class="b" style="left:942.00px;top:426.47px;" width="16" height="14" viewBox="0 0 16 14"><path d="M6 12.4 H1 V1.2 H15 V5" fill="none" stroke="#a3a6b1" stroke-width="1.5"/><path d="M1 3.4 H15" stroke="#a3a6b1" stroke-width="1.6"/><circle cx="10.4" cy="8.8" r="2.6" fill="none" stroke="#a3a6b1" stroke-width="1.5"/><path d="M12.4 10.8 L14.6 13" stroke="#a3a6b1" stroke-width="1.6" stroke-linecap="round"/></svg>
<div class="b" style="left:966.60px;top:422.77px;width:1.00px;height:20.00px;background:#dcdee4;"></div>
<span class="t" style="left:976.20px;top:423px;font-size:14.5px;line-height:20px;color:#6c6e79;letter-spacing:0.000px;">5</span>
<div class="b" style="left:976.00px;top:443.97px;width:9.00px;height:1.00px;background:linear-gradient(90deg,#9a9ca8 0 3.2px,transparent 3.2px 5.8px,#9a9ca8 5.8px 9px);"></div>
<div class="b" style="left:424.20px;top:424.17px;width:35.30px;height:19.60px;background:#dbeefe;border-radius:10px;"></div>
<span class="t" style="left:432.80px;top:426px;font-size:12.5px;line-height:18px;color:#006dca;letter-spacing:3.065px;-webkit-text-stroke:0.45px #006dca;">#5</span>
<div class="b" style="left:252.00px;top:488.34px;width:16.00px;height:16.00px;background:#fff;border:1px solid #ccced6;border-radius:4px;"></div>
<svg class="b" style="left:284.40px;top:489.34px;" width="16" height="16" viewBox="0 0 16 16"><circle cx="8" cy="8" r="7.1" fill="none" stroke="#9c9eaa" stroke-width="1.7"/><path d="M8 4.3 V11.7 M4.3 8 H11.7" stroke="#8a8e9b" stroke-width="1.5" stroke-linecap="round"/></svg>
<span class="t" style="left:305.20px;top:488px;font-size:14.5px;line-height:20px;color:#006dca;letter-spacing:0.450px;">used office furniture</span>
<span class="t" style="left:305.20px;top:509px;font-size:14.5px;line-height:20px;color:#006dca;letter-spacing:0.109px;">near me</span>
<svg class="b" style="left:365.40px;top:514.00px;" width="13" height="12" viewBox="0 0 13 12"><rect x="0.8" y="0.8" width="11.4" height="10.2" rx="0.8" fill="none" stroke="#8f919d" stroke-width="1.5"/><path d="M1 4.6 H12 M9.6 1 V4.4" stroke="#8f919d" stroke-width="1.4"/></svg>
<div class="b" style="left:476.00px;top:490.24px;width:16.00px;height:16.00px;background:#9ef2c9;border-radius:3px;"></div>
<span class="t" style="left:480.49px;top:490px;font-size:11.5px;line-height:16px;color:#007c65;font-weight:700;letter-spacing:0.000px;">T</span>
<span class="t" style="left:563.50px;top:488px;font-size:14.5px;line-height:20px;color:#191b23;letter-spacing:-1.309px;">12.1K</span>
<span class="t" style="left:694.00px;top:488px;font-size:14.5px;line-height:20px;color:#191b23;letter-spacing:1.048px;">57</span>
<div class="b" style="left:720.30px;top:492.54px;width:12.00px;height:12.00px;background:#ff8a3c;border-radius:50%;"></div>
<span class="t" style="left:760.50px;top:488px;font-size:14.5px;line-height:20px;color:#191b23;letter-spacing:0.248px;">21</span>
<div class="b" style="left:785.50px;top:492.54px;width:12.00px;height:12.00px;background:#59ddaa;border-radius:50%;"></div>
<span class="t" style="left:840.70px;top:488px;font-size:14.5px;line-height:20px;color:#191b23;letter-spacing:-0.377px;">2.41</span>
<span class="t" style="left:896.00px;top:488px;font-size:14.5px;line-height:20px;color:#191b23;letter-spacing:0.394px;">0.69</span>
<svg class="b" style="left:942.00px;top:491.64px;" width="16" height="14" viewBox="0 0 16 14"><path d="M6 12.4 H1 V1.2 H15 V5" fill="none" stroke="#a3a6b1" stroke-width="1.5"/><path d="M1 3.4 H15" stroke="#a3a6b1" stroke-width="1.6"/><circle cx="10.4" cy="8.8" r="2.6" fill="none" stroke="#a3a6b1" stroke-width="1.5"/><path d="M12.4 10.8 L14.6 13" stroke="#a3a6b1" stroke-width="1.6" stroke-linecap="round"/></svg>
<div class="b" style="left:966.60px;top:487.94px;width:1.00px;height:20.00px;background:#dcdee4;"></div>
<span class="t" style="left:976.20px;top:488px;font-size:14.5px;line-height:20px;color:#6c6e79;letter-spacing:0.000px;">6</span>
<div class="b" style="left:976.00px;top:509.14px;width:9.00px;height:1.00px;background:linear-gradient(90deg,#9a9ca8 0 3.2px,transparent 3.2px 5.8px,#9a9ca8 5.8px 9px);"></div>
<div class="b" style="left:252.00px;top:553.51px;width:16.00px;height:16.00px;background:#fff;border:1px solid #ccced6;border-radius:4px;"></div>
<svg class="b" style="left:284.40px;top:554.51px;" width="16" height="16" viewBox="0 0 16 16"><circle cx="8" cy="8" r="7.1" fill="none" stroke="#9c9eaa" stroke-width="1.7"/><path d="M8 4.3 V11.7 M4.3 8 H11.7" stroke="#8a8e9b" stroke-width="1.5" stroke-linecap="round"/></svg>
<span class="t" style="left:305.20px;top:553px;font-size:14.5px;line-height:20px;color:#006dca;letter-spacing:0.330px;">ikea tampa office</span>
<span class="t" style="left:305.20px;top:574px;font-size:14.5px;line-height:20px;color:#006dca;letter-spacing:0.425px;">furniture</span>
<svg class="b" style="left:368.30px;top:579.00px;" width="13" height="12" viewBox="0 0 13 12"><rect x="0.8" y="0.8" width="11.4" height="10.2" rx="0.8" fill="none" stroke="#8f919d" stroke-width="1.5"/><path d="M1 4.6 H12 M9.6 1 V4.4" stroke="#8f919d" stroke-width="1.4"/></svg>
<div class="b" style="left:476.00px;top:555.41px;width:16.00px;height:16.00px;background:#edd9ff;border-radius:3px;"></div>
<span class="t" style="left:479.85px;top:556px;font-size:11.5px;line-height:16px;color:#8649e1;font-weight:700;letter-spacing:0.000px;">N</span>
<div class="b" style="left:496.30px;top:555.41px;width:16.00px;height:16.00px;background:#9ef2c9;border-radius:3px;"></div>
<span class="t" style="left:500.79px;top:556px;font-size:11.5px;line-height:16px;color:#007c65;font-weight:700;letter-spacing:0.000px;">T</span>
<span class="t" style="left:569.50px;top:554px;font-size:14.5px;line-height:20px;color:#191b23;letter-spacing:-1.094px;">8.1K</span>
<span class="t" style="left:694.00px;top:554px;font-size:14.5px;line-height:20px;color:#191b23;letter-spacing:1.048px;">75</span>
<div class="b" style="left:720.30px;top:557.71px;width:12.00px;height:12.00px;background:#f2383a;border-radius:50%;"></div>
<span class="t" style="left:760.50px;top:554px;font-size:14.5px;line-height:20px;color:#191b23;letter-spacing:0.248px;">86</span>
<div class="b" style="left:785.50px;top:557.71px;width:12.00px;height:12.00px;background:#f2383a;border-radius:50%;"></div>
<span class="t" style="left:837.50px;top:554px;font-size:14.5px;line-height:20px;color:#191b23;letter-spacing:0.537px;">0.00</span>
<span class="t" style="left:896.00px;top:554px;font-size:14.5px;line-height:20px;color:#191b23;letter-spacing:0.394px;">0.00</span>
<svg class="b" style="left:942.00px;top:556.81px;" width="16" height="14" viewBox="0 0 16 14"><path d="M6 12.4 H1 V1.2 H15 V5" fill="none" stroke="#a3a6b1" stroke-width="1.5"/><path d="M1 3.4 H15" stroke="#a3a6b1" stroke-width="1.6"/><circle cx="10.4" cy="8.8" r="2.6" fill="none" stroke="#a3a6b1" stroke-width="1.5"/><path d="M12.4 10.8 L14.6 13" stroke="#a3a6b1" stroke-width="1.6" stroke-linecap="round"/></svg>
<div class="b" style="left:966.60px;top:553.11px;width:1.00px;height:20.00px;background:#dcdee4;"></div>
<span class="t" style="left:976.20px;top:554px;font-size:14.5px;line-height:20px;color:#6c6e79;letter-spacing:0.000px;">9</span>
<div class="b" style="left:976.00px;top:574.31px;width:9.00px;height:1.00px;background:linear-gradient(90deg,#9a9ca8 0 3.2px,transparent 3.2px 5.8px,#9a9ca8 5.8px 9px);"></div>
<div class="b" style="left:252.00px;top:618.68px;width:16.00px;height:16.00px;background:#fff;border:1px solid #ccced6;border-radius:4px;"></div>
<svg class="b" style="left:284.40px;top:619.68px;" width="16" height="16" viewBox="0 0 16 16"><circle cx="8" cy="8" r="7.1" fill="none" stroke="#9c9eaa" stroke-width="1.7"/><path d="M8 4.3 V11.7 M4.3 8 H11.7" stroke="#8a8e9b" stroke-width="1.5" stroke-linecap="round"/></svg>
<span class="t" style="left:305.20px;top:618px;font-size:14.5px;line-height:20px;color:#006dca;letter-spacing:0.419px;">second hand office</span>
<span class="t" style="left:305.20px;top:639px;font-size:14.5px;line-height:20px;color:#006dca;letter-spacing:0.327px;">furniture near me</span>
<svg class="b" style="left:427.30px;top:644.00px;" width="13" height="12" viewBox="0 0 13 12"><rect x="0.8" y="0.8" width="11.4" height="10.2" rx="0.8" fill="none" stroke="#8f919d" stroke-width="1.5"/><path d="M1 4.6 H12 M9.6 1 V4.4" stroke="#8f919d" stroke-width="1.4"/></svg>
<div class="b" style="left:476.00px;top:620.58px;width:16.00px;height:16.00px;background:#9ef2c9;border-radius:3px;"></div>
<span class="t" style="left:480.49px;top:621px;font-size:11.5px;line-height:16px;color:#007c65;font-weight:700;letter-spacing:0.000px;">T</span>
<span class="t" style="left:569.50px;top:619px;font-size:14.5px;line-height:20px;color:#191b23;letter-spacing:-1.094px;">8.1K</span>
<span class="t" style="left:693.50px;top:619px;font-size:14.5px;line-height:20px;color:#191b23;letter-spacing:1.381px;">60</span>
<div class="b" style="left:720.30px;top:622.88px;width:12.00px;height:12.00px;background:#ff8a3c;border-radius:50%;"></div>
<span class="t" style="left:760.50px;top:619px;font-size:14.5px;line-height:20px;color:#191b23;letter-spacing:0.248px;">35</span>
<div class="b" style="left:785.50px;top:622.88px;width:12.00px;height:12.00px;background:#fdc23c;border-radius:50%;"></div>
<span class="t" style="left:840.70px;top:619px;font-size:14.5px;line-height:20px;color:#191b23;letter-spacing:-0.377px;">2.41</span>
<span class="t" style="left:896.00px;top:619px;font-size:14.5px;line-height:20px;color:#191b23;letter-spacing:0.394px;">0.69</span>
<svg class="b" style="left:942.00px;top:621.98px;" width="16" height="14" viewBox="0 0 16 14"><path d="M6 12.4 H1 V1.2 H15 V5" fill="none" stroke="#a3a6b1" stroke-width="1.5"/><path d="M1 3.4 H15" stroke="#a3a6b1" stroke-width="1.6"/><circle cx="10.4" cy="8.8" r="2.6" fill="none" stroke="#a3a6b1" stroke-width="1.5"/><path d="M12.4 10.8 L14.6 13" stroke="#a3a6b1" stroke-width="1.6" stroke-linecap="round"/></svg>
<div class="b" style="left:966.60px;top:618.28px;width:1.00px;height:20.00px;background:#dcdee4;"></div>
<span class="t" style="left:976.20px;top:619px;font-size:14.5px;line-height:20px;color:#6c6e79;letter-spacing:0.000px;">8</span>
<div class="b" style="left:976.00px;top:639.48px;width:9.00px;height:1.00px;background:linear-gradient(90deg,#9a9ca8 0 3.2px,transparent 3.2px 5.8px,#9a9ca8 5.8px 9px);"></div>
<div class="b" style="left:252.00px;top:683.85px;width:16.00px;height:16.00px;background:#fff;border:1px solid #ccced6;border-radius:4px;"></div>
<svg class="b" style="left:284.40px;top:684.85px;" width="16" height="16" viewBox="0 0 16 16"><circle cx="8" cy="8" r="7.1" fill="none" stroke="#9c9eaa" stroke-width="1.7"/><path d="M8 4.3 V11.7 M4.3 8 H11.7" stroke="#8a8e9b" stroke-width="1.5" stroke-linecap="round"/></svg>
<span class="t" style="left:305.20px;top:684px;font-size:14.5px;line-height:20px;color:#006dca;letter-spacing:0.439px;">office home</span>
<span class="t" style="left:305.20px;top:704px;font-size:14.5px;line-height:20px;color:#006dca;letter-spacing:0.496px;">office furniture</span>
<svg class="b" style="left:306.00px;top:729.50px;" width="13" height="12" viewBox="0 0 13 12"><rect x="0.8" y="0.8" width="11.4" height="10.2" rx="0.8" fill="none" stroke="#8f919d" stroke-width="1.5"/><path d="M1 4.6 H12 M9.6 1 V4.4" stroke="#8f919d" stroke-width="1.4"/></svg>
<div class="b" style="left:476.00px;top:685.75px;width:16.00px;height:16.00px;background:#9ef2c9;border-radius:3px;"></div>
<span class="t" style="left:480.49px;top:686px;font-size:11.5px;line-height:16px;color:#007c65;font-weight:700;letter-spacing:0.000px;">T</span>
<span class="t" style="left:565.50px;top:684px;font-size:14.5px;line-height:20px;color:#191b23;letter-spacing:0.049px;">6.6K</span>
<span class="t" style="left:703.50px;top:684px;font-size:14.5px;line-height:20px;color:#191b23;letter-spacing:0.000px;">0</span>
<div class="b" style="left:720.30px;top:688.05px;width:12.00px;height:12.00px;background:#179a7a;border-radius:50%;"></div>
<span class="t" style="left:760.50px;top:684px;font-size:14.5px;line-height:20px;color:#191b23;letter-spacing:0.248px;">30</span>
<div class="b" style="left:785.50px;top:688.05px;width:12.00px;height:12.00px;background:#fdc23c;border-radius:50%;"></div>
<span class="t" style="left:837.50px;top:684px;font-size:14.5px;line-height:20px;color:#191b23;letter-spacing:0.537px;">2.00</span>
<span class="t" style="left:896.00px;top:684px;font-size:14.5px;line-height:20px;color:#191b23;letter-spacing:0.394px;">0.99</span>
<svg class="b" style="left:942.00px;top:687.15px;" width="16" height="14" viewBox="0 0 16 14"><path d="M6 12.4 H1 V1.2 H15 V5" fill="none" stroke="#a3a6b1" stroke-width="1.5"/><path d="M1 3.4 H15" stroke="#a3a6b1" stroke-width="1.6"/><circle cx="10.4" cy="8.8" r="2.6" fill="none" stroke="#a3a6b1" stroke-width="1.5"/><path d="M12.4 10.8 L14.6 13" stroke="#a3a6b1" stroke-width="1.6" stroke-linecap="round"/></svg>
<div class="b" style="left:966.60px;top:683.45px;width:1.00px;height:20.00px;background:#dcdee4;"></div>
<span class="t" style="left:976.20px;top:684px;font-size:14.5px;line-height:20px;color:#6c6e79;letter-spacing:0.000px;">6</span>
<div class="b" style="left:976.00px;top:704.65px;width:9.00px;height:1.00px;background:linear-gradient(90deg,#9a9ca8 0 3.2px,transparent 3.2px 5.8px,#9a9ca8 5.8px 9px);"></div>
<div class="b" style="left:427.00px;top:684.85px;width:32.50px;height:19.60px;background:#dbeefe;border-radius:10px;"></div>
<span class="t" style="left:435.40px;top:686px;font-size:12.5px;line-height:18px;color:#006dca;letter-spacing:1.331px;-webkit-text-stroke:0.45px #006dca;">#1</span>
<div class="b" style="left:1003.00px;top:302.20px;width:6.30px;height:467.80px;background:linear-gradient(90deg,rgba(25,27,35,0) 0%,rgba(25,27,35,0.10) 100%);"></div>
<div class="b" style="left:202.40px;top:246.30px;width:205.60px;height:185.70px;background:#fff;border-radius:6px;box-shadow:0 1px 12px rgba(25,27,35,0.18),0 0 1px rgba(25,27,35,0.25);"></div>
<div class="b" style="left:202.40px;top:348.00px;width:205.60px;height:32.70px;background:#d9edfe;"></div>
<div class="b" style="left:202.40px;top:348.00px;width:1.90px;height:32.70px;background:#2b94e1;"></div>
<div class="b" style="left:210.60px;top:258.50px;width:16.00px;height:16.00px;background:#fff;border:1px solid #ccced6;border-radius:4px;"></div>
<span class="t" style="left:235.60px;top:256px;font-size:14.5px;line-height:20px;color:#191b23;letter-spacing:0.238px;">Informational</span>
<svg class="b" style="left:334.00px;top:260.40px;" width="8" height="12" viewBox="0 0 8 12"><path d="M1.6 4.4 H4.4 L3.2 10.6 M0.8 10.8 H6.6" fill="none" stroke="#a9abb6" stroke-width="1.3" stroke-linejoin="round"/><circle cx="4.3" cy="1.5" r="1.05" fill="#a9abb6"/></svg>
<div class="b" style="left:210.60px;top:291.40px;width:16.00px;height:16.00px;background:#fff;border:1px solid #ccced6;border-radius:4px;"></div>
<span class="t" style="left:235.60px;top:289px;font-size:14.5px;line-height:20px;color:#191b23;letter-spacing:0.200px;">Navigational</span>
<svg class="b" style="left:329.10px;top:293.40px;" width="8" height="12" viewBox="0 0 8 12"><path d="M1.6 4.4 H4.4 L3.2 10.6 M0.8 10.8 H6.6" fill="none" stroke="#a9abb6" stroke-width="1.3" stroke-linejoin="round"/><circle cx="4.3" cy="1.5" r="1.05" fill="#a9abb6"/></svg>
<div class="b" style="left:210.60px;top:324.00px;width:16.00px;height:16.00px;background:#fff;border:1px solid #ccced6;border-radius:4px;"></div>
<span class="t" style="left:235.60px;top:321px;font-size:14.5px;line-height:20px;color:#191b23;letter-spacing:0.175px;">Commercial</span>
<svg class="b" style="left:325.80px;top:325.40px;" width="8" height="12" viewBox="0 0 8 12"><path d="M1.6 4.4 H4.4 L3.2 10.6 M0.8 10.8 H6.6" fill="none" stroke="#a9abb6" stroke-width="1.3" stroke-linejoin="round"/><circle cx="4.3" cy="1.5" r="1.05" fill="#a9abb6"/></svg>
<div class="b" style="left:210.90px;top:356.40px;width:15.90px;height:15.90px;background:#008ff8;border-radius:4px;"></div>
<svg class="b" style="left:210.90px;top:356.40px;" width="16" height="16" viewBox="0 0 16 16"><path d="M4.4 8.2 L7 10.7 L11.8 5.7" fill="none" stroke="#fff" stroke-width="2" stroke-linecap="round" stroke-linejoin="round"/></svg>
<span class="t" style="left:236.40px;top:354px;font-size:14.5px;line-height:20px;color:#191b23;letter-spacing:0.160px;">Transactional</span>
<svg class="b" style="left:336.50px;top:358.40px;" width="8" height="12" viewBox="0 0 8 12"><path d="M1.6 4.4 H4.4 L3.2 10.6 M0.8 10.8 H6.6" fill="none" stroke="#a9abb6" stroke-width="1.3" stroke-linejoin="round"/><circle cx="4.3" cy="1.5" r="1.05" fill="#a9abb6"/></svg>
<div class="b" style="left:211.80px;top:393.00px;width:187.00px;height:28.30px;background:#008ff8;border-radius:6px;"></div>
<span class="t" style="left:286.00px;top:397px;font-size:14.5px;line-height:20px;color:#fff;font-weight:700;letter-spacing:-0.351px;">Apply</span>
<div class="b" style="left:185.70px;top:195.60px;width:236.20px;height:10.00px;background:#b983ff;"></div>
<div class="b" style="left:185.70px;top:429.80px;width:236.20px;height:9.80px;background:#b983ff;"></div>
<div class="b" style="left:185.70px;top:195.60px;width:9.80px;height:244.00px;background:#b983ff;"></div>
<div class="b" style="left:411.90px;top:195.60px;width:10.00px;height:244.00px;background:#b983ff;"></div>
<svg class="b" style="left:0;top:0" width="1024" height="758" viewBox="0 0 1024 758"><path d="M2 359.2 H158.9 V339.4 L208.6 364.2 L158.9 389 V369.4 H2 Z" fill="#b983ff"/><path d="M21.8 402.1 H179.3 V382.6 L228.6 407.3 L179.3 432 V412.5 H21.8 Z" fill="#b983ff"/></svg>
</div></body></html>
